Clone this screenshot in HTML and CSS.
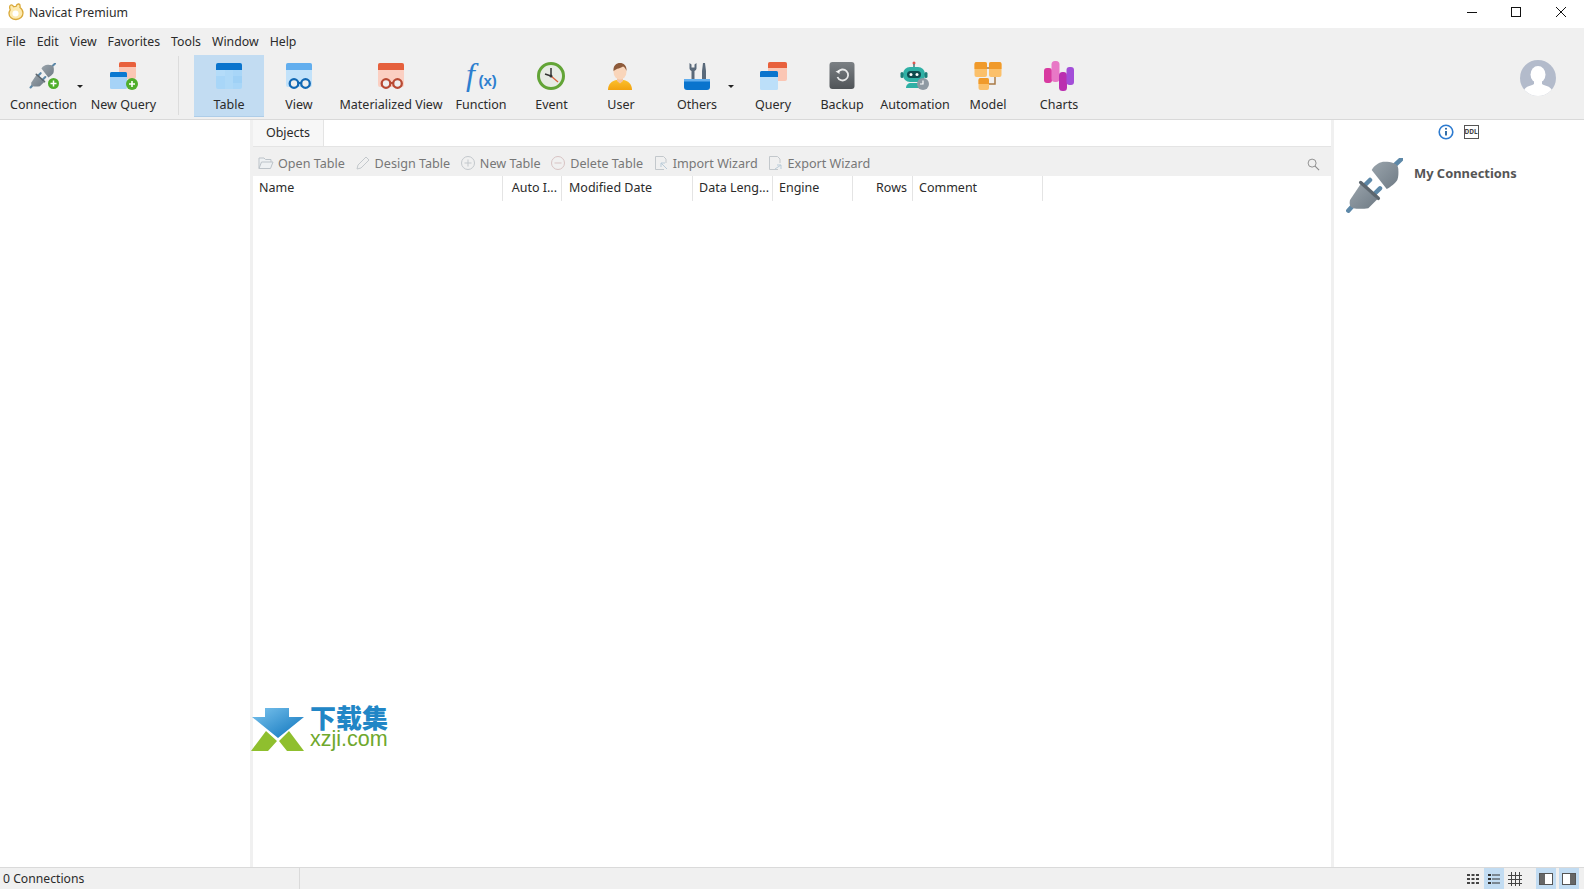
FILE: index.html
```html
<!DOCTYPE html>
<html lang="en">
<head>
<meta charset="utf-8">
<title>Navicat Premium</title>
<link rel="stylesheet" href="styles.css">
</head>
<body>
<svg class="defs" aria-hidden="true">
  <defs>
    <linearGradient id="plug-g" x1="0" y1="0" x2="1" y2="1"><stop offset="0" stop-color="#9aa4ac"/><stop offset="1" stop-color="#6f7b85"/></linearGradient>
    <linearGradient id="wm-blue" x1="0" y1="0" x2="1" y2="1"><stop offset="0" stop-color="#7cc4ee"/><stop offset="1" stop-color="#0a72bb"/></linearGradient>
    <linearGradient id="backup-g" x1="0" y1="0" x2="0" y2="1"><stop offset="0" stop-color="#7b8084"/><stop offset="1" stop-color="#505458"/></linearGradient>
    <linearGradient id="user-g" x1="0" y1="0" x2="0" y2="1"><stop offset="0" stop-color="#fbc02d"/><stop offset="1" stop-color="#f2a20f"/></linearGradient>
    <symbol id="plug" viewBox="0 0 58 56">
      <path d="M50 7l6-5.700M10 45.300l-6.700 7.400M25 22l-5 5M35 30.300L28.300 37" stroke="#5d88a8" stroke-width="4.500" stroke-linecap="round" fill="none"/>
      <path d="M26.700 12C30 6 36 3.500 40 3.700c6 0 13 1.500 13.300 7 .3 4.500.3 8-1 11.300-2 3-6.500 7-10.600 9z" fill="url(#plug-g)"/>
      <path d="M15.700 26l16.600 15.300-9 9c-5 .7-11 .8-15 0C5 49 4 46 5 42z" fill="url(#plug-g)"/>
      <path d="M15.700 24.500L33.300 40.300" stroke="#5c666e" stroke-width="3.500" stroke-linecap="round"/>
    </symbol>
  </defs>
</svg>
<div class="app">
  <header class="titlebar">
    <svg class="app-logo" viewBox="0 0 18 18"><path d="M9 16.500c-4 0-7-2.500-7-6 0-1.500.6-2.600 1.200-3.600C2.500 4.800 2.600 2.500 3.800 2c1-.4 2.200.7 2.900 1.700.7-.2 1.500-.3 2.300-.3.300-1 1.400-2.600 2.800-2.400 1.200.2 1.500 1.800 1.200 3.600 1.500 1.100 3 3 3 5.400 0 3.500-2.900 6.500-7 6.500z" fill="#fdeab0" stroke="#d9a93a" stroke-width="1.300"/><circle cx="8.500" cy="10.500" r="3" fill="#fff"/></svg>
    <span class="app-title">Navicat Premium</span>
    <div class="win-controls">
      <svg viewBox="0 0 12 12"><path d="M1 6.500h10" stroke="#111" fill="none"/></svg>
      <svg viewBox="0 0 12 12"><rect x="1.500" y="1.500" width="9" height="9" stroke="#111" fill="none"/></svg>
      <svg viewBox="0 0 12 12"><path d="M1 1l10 10M11 1L1 11" stroke="#111" fill="none"/></svg>
    </div>
  </header>

  <nav class="menubar">
    <span>File</span><span>Edit</span><span>View</span><span>Favorites</span><span>Tools</span><span>Window</span><span>Help</span>
  </nav>

  <div class="toolbar">
    <div class="tool w-conn">
      <svg viewBox="0 0 32 32"><use href="#plug" x="1" y="3" width="27" height="26"/><circle cx="25.500" cy="23.500" r="5.500" fill="#4fae2b"/><path d="M22.500 23.500h6M25.500 20.500v6" stroke="#fff" stroke-width="1.500"/></svg>
      <span>Connection</span><i class="caret"></i>
    </div>
    <div class="tool w-query">
      <svg viewBox="0 0 32 32"><rect x="11" y="2" width="17" height="17" rx="2" fill="#fbc6b4"/><path d="M11 7V4a2 2 0 012-2h13a2 2 0 012 2v3z" fill="#e8603c"/><rect x="2" y="12" width="17" height="17" rx="1.500" fill="#a6d3f7"/><path d="M2 17v-3.500A1.500 1.500 0 013.500 12h14a1.500 1.500 0 011.500 1.500V17z" fill="#0a78d0"/><circle cx="24" cy="24" r="6" fill="#4fae2b"/><path d="M21 24h6M24 21v6" stroke="#fff" stroke-width="1.600"/></svg>
      <span>New Query</span>
    </div>
    <div class="tool-sep"></div>
    <div class="tool w-table active">
      <svg viewBox="0 0 32 32"><rect x="3" y="3" width="26" height="26" rx="2" fill="#a8d6f8"/><path d="M3 10V5a2 2 0 012-2h22a2 2 0 012 2v5z" fill="#0a74cd"/><path d="M12 10h8v19h-8z" fill="#aed9f8"/><path d="M3 10h9v6H3z" fill="#b4dcf9"/><path d="M20 16h9v7h-9z" fill="#9fd1f6"/></svg>
      <span>Table</span>
    </div>
    <div class="tool w-view">
      <svg viewBox="0 0 32 32"><rect x="3" y="3" width="26" height="24" rx="2" fill="#c2e2fa"/><path d="M3 10V5a2 2 0 012-2h22a2 2 0 012 2v5z" fill="#62aeee"/><circle cx="11" cy="23.500" r="4.300" fill="#efefef" stroke="#1268b4" stroke-width="2.300"/><circle cx="22.500" cy="23.500" r="4.300" fill="#efefef" stroke="#1268b4" stroke-width="2.300"/><path d="M15 23h4" stroke="#1268b4" stroke-width="2"/></svg>
      <span>View</span>
    </div>
    <div class="tool w-mat">
      <svg viewBox="0 0 32 32"><rect x="3" y="3" width="26" height="24" rx="2" fill="#fbcfc2"/><path d="M3 10V5a2 2 0 012-2h22a2 2 0 012 2v5z" fill="#e5603d"/><circle cx="11" cy="23.500" r="4.300" fill="#efefef" stroke="#b84a34" stroke-width="2.300"/><circle cx="22.500" cy="23.500" r="4.300" fill="#efefef" stroke="#b84a34" stroke-width="2.300"/><path d="M15 23h4" stroke="#b84a34" stroke-width="2"/></svg>
      <span>Materialized View</span>
    </div>
    <div class="tool w-func">
      <svg class="fx" viewBox="0 0 32 32"><text class="fx-f" x="1" y="25">f</text><text class="fx-x" x="13.500" y="26">(x)</text></svg>
      <span>Function</span>
    </div>
    <div class="tool w-event">
      <svg viewBox="0 0 32 32"><circle cx="15" cy="16" r="12.500" fill="#e6ebe4" stroke="#62a436" stroke-width="3"/><path d="M15 8v8" stroke="#333" stroke-width="1.500"/><path d="M15 16l-6-2" stroke="#333" stroke-width="1.500"/><path d="M15 16l7 6" stroke="#d9603a" stroke-width="1.300"/><circle cx="15" cy="16" r="1.500" fill="#333"/></svg>
      <span>Event</span>
    </div>
    <div class="tool w-user">
      <svg viewBox="0 0 32 32"><path d="M3 30c0-6 4-9.500 9-10h6c5 .5 9 4 9 10z" fill="url(#user-g)"/><path d="M12 17h6v4l-3 2.500-3-2.500z" fill="#f3c4a2"/><ellipse cx="15" cy="11.500" rx="6.500" ry="8" fill="#f9d5ba"/><path d="M8.500 11c-.5-5.500 3-8 6.500-8s7 2.500 6.500 8c-1-2.500-2-4-3.500-4.500-2 1.500-6.500 2-9.500 4.500z" fill="#8d5a3a"/></svg>
      <span>User</span>
    </div>
    <div class="tool w-others">
      <svg viewBox="0 0 32 32"><path d="M8.500 3v5.500a2.500 2.500 0 002 2.400V24h3V10.900a2.500 2.500 0 002-2.400V3l-2 1.500v3h-3v-3z" fill="#59697a"/><path d="M21 24V11l1-8h2l1 8v13z" fill="#59697a"/><path d="M3 19h26v8a3 3 0 01-3 3H6a3 3 0 01-3-3z" fill="#0a74cd"/><path d="M3 19h26v2.500H3z" fill="#62aeee"/></svg>
      <span>Others</span><i class="caret"></i>
    </div>
    <div class="tool w-q2">
      <svg viewBox="0 0 32 32"><rect x="11" y="2" width="19" height="19" rx="2" fill="#fbc6b4"/><path d="M11 8V4a2 2 0 012-2h15a2 2 0 012 2v4z" fill="#e8603c"/><rect x="3" y="11" width="18" height="19" rx="1.500" fill="#bcdff9"/><path d="M3 17v-4.500A1.500 1.500 0 014.500 11h15a1.500 1.500 0 011.500 1.500V17z" fill="#0a74cd"/></svg>
      <span>Query</span>
    </div>
    <div class="tool w-backup">
      <svg viewBox="0 0 32 32"><rect x="3.500" y="2" width="25" height="27" rx="3" fill="url(#backup-g)"/><path d="M12 12a5.500 5.500 0 11-.5 5" fill="none" stroke="#fff" stroke-width="1.800" opacity=".85"/><path d="M9.500 11.500l3.800-1.500.3 4z" fill="#fff" opacity=".85"/></svg>
      <span>Backup</span>
    </div>
    <div class="tool w-auto">
      <svg viewBox="0 0 32 32"><circle cx="15" cy="3" r="1.500" fill="#e0574f"/><path d="M15 4v4" stroke="#477" stroke-width="1.500"/><rect x="4" y="7" width="22" height="15" rx="7" fill="#2fb0a5"/><rect x="1.500" y="12" width="3" height="6" rx="1.500" fill="#1d7f7a"/><rect x="25.500" y="12" width="3" height="6" rx="1.500" fill="#1d7f7a"/><rect x="8" y="11" width="14" height="7" rx="3.500" fill="#0e4a4d"/><circle cx="12" cy="14.500" r="1.500" fill="#fff"/><circle cx="18" cy="14.500" r="1.500" fill="#fff"/><path d="M7 28c0-3 2-5 5-5h6c3 0 4 1 4 3v2z" fill="#2fb0a5"/><circle cx="24" cy="24" r="6" fill="#8f9aa3"/><path d="M24 20.500V24h-3" stroke="#fff" stroke-width="1.200" fill="none"/></svg>
      <span>Automation</span>
    </div>
    <div class="tool w-model">
      <svg viewBox="0 0 32 32"><path d="M15 8h4M23 17v7h-6" stroke="#a87a45" stroke-width="1.500" fill="none"/><rect x="2.500" y="2" width="12.500" height="15" rx="2" fill="#fbc06a"/><path d="M2.500 9V4a2 2 0 012-2H13a2 2 0 012 2v5z" fill="#f09a2b"/><rect x="17" y="2" width="12.500" height="15" rx="2" fill="#fbc06a"/><path d="M17 9V4a2 2 0 012-2h8.500a2 2 0 012 2v5z" fill="#f09a2b"/><rect x="6.500" y="18" width="10.500" height="12" rx="2" fill="#fbc06a"/><path d="M6.500 24v-4a2 2 0 012-2H15a2 2 0 012 2v4z" fill="#f09a2b"/></svg>
      <span>Model</span>
    </div>
    <div class="tool w-charts">
      <svg viewBox="0 0 32 32"><rect x="1" y="8" width="8" height="15" rx="3" fill="#d83aa0"/><rect x="8.500" y="1" width="8" height="21" rx="3.500" fill="#e878c6"/><rect x="16" y="12" width="8" height="19" rx="3.500" fill="#bb2fb0"/><rect x="23.500" y="7" width="7.500" height="18" rx="3" fill="#a34ed8"/></svg>
      <span>Charts</span>
    </div>
    <div class="toolbar-fill"></div>
    <svg class="avatar" viewBox="0 0 36 36"><defs><clipPath id="avatar-clip"><circle cx="18" cy="18" r="18"/></clipPath></defs><circle cx="18" cy="18" r="18" fill="#b3bbcb"/><g clip-path="url(#avatar-clip)" fill="#fff"><ellipse cx="18" cy="14.500" rx="7.500" ry="8.500"/><path d="M14 21h8v3c3 2 8 2 10 6v7H4v-7c2-4 7-4 10-6z"/></g></svg>
  </div>

  <main class="workspace">
    <aside class="nav-pane"></aside>
    <section class="center">
      <div class="tabs"><div class="tab">Objects</div></div>
      <div class="actions">
        <span class="action"><svg viewBox="0 0 16 16"><path d="M1 13.500V3h5l1.500 1.500H13V7M1 13.500L3.500 7H15l-2.500 6.500z" fill="#eef1f3" stroke="#bcc3c9"/></svg>Open Table</span>
        <span class="action"><svg viewBox="0 0 16 16"><path d="M2 14l1-4 8-8 3 3-8 8z" fill="none" stroke="#c3c8cc"/></svg>Design Table</span>
        <span class="action"><svg viewBox="0 0 16 16"><circle cx="8" cy="8" r="6.500" fill="none" stroke="#c3c8cc"/><path d="M8 4.500v7M4.500 8h7" stroke="#c3c8cc"/></svg>New Table</span>
        <span class="action"><svg viewBox="0 0 16 16"><circle cx="8" cy="8" r="6.500" fill="none" stroke="#d8c3c3"/><path d="M4.500 8h7" stroke="#d8c3c3"/></svg>Delete Table</span>
        <span class="action"><svg viewBox="0 0 16 16"><path d="M11 14.500H2.500v-13h8L13 4v4" fill="none" stroke="#c3c8cc"/><path d="M14 14L8 8m0 4V8h4" fill="none" stroke="#b9cbd8"/></svg>Import Wizard</span>
        <span class="action"><svg viewBox="0 0 16 16"><path d="M11 14.500H2.500v-13h8L13 4v4" fill="none" stroke="#c3c8cc"/><path d="M8 14l6-4m0 4v-4h-4" fill="none" stroke="#b9cbd8"/></svg>Export Wizard</span>
        <svg class="search" viewBox="0 0 14 14"><circle cx="5.500" cy="5.500" r="4.300" fill="none" stroke="#8a8a8a"/><path d="M8.700 8.700l4.300 4.300" stroke="#8a8a8a" stroke-width="1.100"/></svg>
      </div>
      <div class="grid-head">
        <div class="col c-name">Name</div>
        <div class="col c-auto right">Auto I...</div>
        <div class="col c-mod">Modified Date</div>
        <div class="col c-len right">Data Leng...</div>
        <div class="col c-eng">Engine</div>
        <div class="col c-rows right">Rows</div>
        <div class="col c-com">Comment</div>
      </div>
      <div class="watermark">
        <svg viewBox="0 0 54 44"><path d="M14 1h24v9h15L27 31 1 10h13z" fill="url(#wm-blue)"/><path d="M0 44l15-20 11 10-9 10zM28 34l10-10 15 20H36z" fill="#8fbf2e"/></svg>
        <div class="wm-text"><span class="wm-cn">下载集</span><span class="wm-en">xzji.com</span></div>
      </div>
    </section>
    <aside class="info-pane">
      <div class="info-icons">
        <svg viewBox="0 0 16 16"><circle cx="8" cy="8" r="6.800" fill="#fff" stroke="#2d7bd0" stroke-width="1.600"/><path d="M8 7v4.500" stroke="#1f5f9e" stroke-width="1.800"/><circle cx="8" cy="4.800" r="1" fill="#1f5f9e"/></svg>
        <span class="ddl">DDL</span>
      </div>
      <div class="info-head">
        <svg class="big-plug"><use href="#plug"/></svg>
        <span class="info-title">My Connections</span>
      </div>
    </aside>
  </main>

  <footer class="statusbar">
    <div class="status-left">0 Connections</div>
    <div class="status-icons">
      <span class="st-btn"><svg viewBox="0 0 14 14"><path d="M1 2h3v2H1zM5.500 2h3v2h-3zM10 2h3v2h-3zM1 6h3v2H1zM5.500 6h3v2h-3zM10 6h3v2h-3zM1 10h3v2H1zM5.500 10h3v2h-3zM10 10h3v2h-3z" fill="#444"/></svg></span>
      <span class="st-btn on"><svg viewBox="0 0 14 14"><path d="M1 2h3v2H1zM1 6h3v2H1zM1 10h3v2H1z" fill="#333"/><path d="M5 3h8M5 7h8M5 11h8" stroke="#333"/></svg></span>
      <span class="st-btn"><svg viewBox="0 0 14 14"><path d="M0 3.500h14M0 7.500h14M0 11.500h14M3.500 0v14M7.500 0v14M11.500 0v14" stroke="#444" fill="none"/></svg></span>
      <span class="st-gap"></span>
      <span class="st-btn on"><svg viewBox="0 0 14 14"><rect x=".5" y="1.500" width="13" height="11" fill="#fff" stroke="#555"/><rect x="1" y="2" width="5" height="10" fill="#666"/></svg></span>
      <span class="st-btn on st-last"><svg viewBox="0 0 14 14"><rect x=".5" y="1.500" width="13" height="11" fill="#fff" stroke="#555"/><rect x="8" y="2" width="5" height="10" fill="#666"/></svg></span>
    </div>
  </footer>
</div>
</body>
</html>
```
FILE: styles.css
```css
* { box-sizing: border-box; }
html, body { margin: 0; height: 100%; overflow: hidden; }
body { font-family: "Noto Sans", "Noto Sans CJK SC", sans-serif; font-size: 12.5px; color: #2b2b2b; background: #fff; }
.defs { width: 0; height: 0; display: block; overflow: hidden; }
.app { display: flex; flex-direction: column; height: 889px; width: 1584px; }

.titlebar { height: 28px; display: flex; align-items: center; padding: 0 0 4px 7px; background: #fff; flex: none; }
.app-logo { width: 18px; height: 18px; }
.app-title { margin-left: 4px; font-size: 12.300px; }
.win-controls { margin-left: auto; display: flex; gap: 32.500px; padding-right: 17.500px; }
.win-controls svg { width: 12px; height: 12px; }

.menubar { height: 27px; background: #f0f0f0; display: flex; align-items: center; gap: 11px; padding-left: 6px; flex: none; font-size: 12.300px; }

.toolbar { height: 65px; background: #f0f0f0; border-bottom: 1px solid #d9d9d9; display: flex; align-items: stretch; padding-left: 6px; flex: none; }
.tool { position: relative; display: flex; flex-direction: column; align-items: center; height: 62px; padding-top: 5px; flex: none; white-space: nowrap; }
.tool svg { width: 32px; height: 32px; }
.tool span { margin-top: 4px; line-height: 18px; }
.tool.active { background: #c2dcf2; border-bottom: 1px solid #aecde8; }
.caret { position: absolute; top: 30px; right: -2px; width: 0; height: 0; border-left: 3px solid transparent; border-right: 3px solid transparent; border-top: 3px solid #222; }
.w-conn { width: 75px; }
.w-query { width: 75px; margin-left: 5px; }
.tool-sep { width: 1px; height: 59px; background: #dcdcdc; margin: 1px 15px 0 17px; flex: none; }
.w-table { width: 70px; }
.w-view { width: 70px; }
.w-mat { width: 114px; }
.w-func { width: 66px; }
.w-event { width: 75px; }
.w-user { width: 64px; }
.w-others { width: 88px; }
.w-others .caret { right: 7px; }
.w-q2 { width: 64px; }
.w-backup { width: 74px; }
.w-auto { width: 72px; }
.w-model { width: 74px; }
.w-charts { width: 68px; }
.toolbar-fill { flex: 1; }
.avatar { width: 36px; height: 36px; margin: 5px 28px 0 0; flex: none; }
.tool svg.fx { overflow: visible; }
.fx-f { font-family: "Liberation Serif", serif; font-style: italic; font-size: 32px; fill: #2d7fcf; }
.fx-x { font-family: "Liberation Sans", sans-serif; font-size: 15px; font-weight: 700; fill: #2d7fcf; }

.workspace { flex: 1; display: flex; min-height: 0; }
.nav-pane { width: 250px; flex: none; background: #fff; }
.center { position: relative; flex: 1; display: flex; flex-direction: column; border-left: 3px solid #f0f0f0; border-right: 3px solid #f0f0f0; }
.info-pane { width: 250px; flex: none; background: #fff; }

.tabs { height: 27px; border-bottom: 1px solid #e4e4e4; display: flex; flex: none; }
.tab { width: 71px; background: #f7f7f7; border-right: 1px solid #e4e4e4; height: 26px; padding-bottom: 2px; display: flex; align-items: center; justify-content: center; }
.actions { height: 29px; background: #f0f0f0; position: relative; display: flex; align-items: center; padding: 3px 0 0 5px; gap: 9.700px; color: #777; flex: none; font-size: 12.600px; }
.action { display: flex; align-items: center; gap: 4px; white-space: nowrap; }
.action svg { width: 16px; height: 16px; flex: none; }
.search { position: absolute; right: 11px; top: 11px; width: 13px; height: 13px; }

.grid-head { height: 25px; display: flex; flex: none; background: #fff; }
.col { border-right: 1px solid #e4e4e4; padding: 0 6px; line-height: 23px; white-space: nowrap; overflow: hidden; flex: none; }
.right { text-align: right; }
.c-name { width: 250px; }
.c-auto { width: 59px; padding-right: 4px; }
.c-mod { width: 131px; padding-left: 7px; }
.c-len { width: 80px; padding-right: 5px; }
.c-eng { width: 80px; }
.c-rows { width: 60px; padding-right: 5px; }
.c-com { width: 130px; }

.watermark { position: absolute; left: -2px; top: 587px; display: flex; align-items: flex-start; gap: 5px; }
.watermark svg { width: 54px; height: 44px; flex: none; }
.wm-text { display: flex; flex-direction: column; margin-top: -3px; }
.wm-cn { font-family: "Noto Sans CJK SC", sans-serif; font-weight: 900; font-size: 26px; line-height: 25px; color: #2186c6; }
.wm-en { font-family: "Liberation Sans", sans-serif; font-size: 21.500px; line-height: 20px; color: #6fa82c; }

.info-icons { height: 24px; display: flex; align-items: center; justify-content: center; gap: 10px; padding-right: 2px; }
.info-icons svg { width: 16px; height: 16px; }
.ddl { width: 15px; height: 14px; border: 1px solid #555; font-size: 6.500px; font-weight: 700; line-height: 12px; text-align: center; color: #444; overflow: hidden; }
.info-head { display: flex; align-items: flex-start; padding: 14px 0 0 11px; }
.big-plug { width: 58px; height: 56px; flex: none; }
.info-title { margin: 6px 0 0 11px; font-size: 12.900px; font-weight: 700; color: #555; }

.statusbar { height: 22px; background: #f0f0f0; border-top: 1px solid #dadada; display: flex; align-items: center; flex: none; font-size: 12.200px; }
.status-left { width: 300px; height: 100%; padding-left: 3px; line-height: 21px; border-right: 1px solid #dadada; }
.status-icons { margin-left: auto; display: flex; height: 100%; align-items: center; padding-right: 5px; }
.st-btn { width: 20px; height: 21px; display: flex; align-items: center; justify-content: center; margin-left: 1px; }
.st-btn svg { width: 14px; height: 14px; }
.st-btn.on { background: #c2dcf2; }
.st-btn.st-last { margin-left: 3px; }
.st-gap { width: 10px; }
```
